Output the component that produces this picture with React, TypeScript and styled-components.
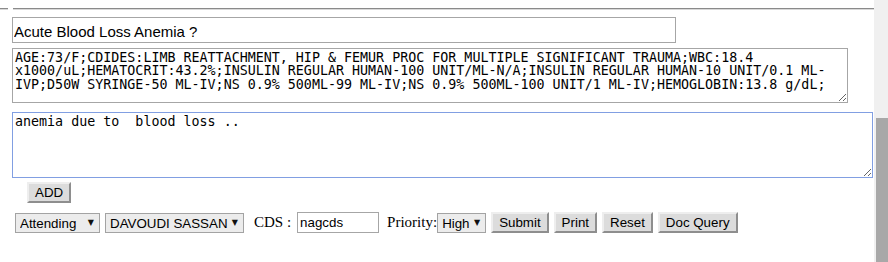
import React, { useState } from 'react';
import styled, { createGlobalStyle } from 'styled-components';

const GlobalStyle = createGlobalStyle`
  html, body {
    margin: 0;
    padding: 0;
    background: #fff;
    overflow: hidden;
  }
`;

const NOTE_TEXT =
  'AGE:73/F;CDIDES:LIMB REATTACHMENT, HIP & FEMUR PROC FOR MULTIPLE SIGNIFICANT TRAUMA;WBC:18.4 x1000/uL;HEMATOCRIT:43.2%;INSULIN REGULAR HUMAN-100 UNIT/ML-N/A;INSULIN REGULAR HUMAN-10 UNIT/0.1 ML-IVP;D50W SYRINGE-50 ML-IV;NS 0.9% 500ML-99 ML-IV;NS 0.9% 500ML-100 UNIT/1 ML-IV;HEMOGLOBIN:13.8 g/dL;';

const App = () => {
  const [title, setTitle] = useState('Acute Blood Loss Anemia ?');
  const [comment, setComment] = useState('anemia due to  blood loss ..');
  const [cds, setCds] = useState('nagcds');
  const [role, setRole] = useState('Attending');
  const [doctor, setDoctor] = useState('DAVOUDI SASSAN');
  const [priority, setPriority] = useState('High');

  return (
    <>
      <GlobalStyle />
      <Page>
        <Content>
          <RuleRow>
            <RuleStub />
            <Rule />
          </RuleRow>
          <Form>
            <TitleInput value={title} onChange={(e) => setTitle(e.target.value)} />
            <NoteArea readOnly value={NOTE_TEXT} />
            <CommentArea value={comment} onChange={(e) => setComment(e.target.value)} />
            <AddRow>
              <Button>ADD</Button>
            </AddRow>
            <ActionRow>
              <SelectBox width="85px">
                <Select value={role} onChange={(e) => setRole(e.target.value)}>
                  <option>Attending</option>
                  <option>Resident</option>
                </Select>
                <Arrow>▼</Arrow>
              </SelectBox>
              <SelectBox>
                <Select value={doctor} onChange={(e) => setDoctor(e.target.value)}>
                  <option>DAVOUDI SASSAN</option>
                </Select>
                <Arrow>▼</Arrow>
              </SelectBox>
              <Label>CDS :</Label>
              <CdsInput value={cds} onChange={(e) => setCds(e.target.value)} />
              <Label tight>Priority:</Label>
              <SelectBox>
                <Select value={priority} onChange={(e) => setPriority(e.target.value)}>
                  <option>High</option>
                  <option>Low</option>
                </Select>
                <Arrow>▼</Arrow>
              </SelectBox>
              <Buttons>
                <Button>Submit</Button>
                <Button>Print</Button>
                <Button>Reset</Button>
                <Button>Doc Query</Button>
              </Buttons>
            </ActionRow>
          </Form>
        </Content>
        <ScrollTrack>
          <ScrollThumb />
        </ScrollTrack>
      </Page>
    </>
  );
};

export default App;

const Page = styled.div`
  display: flex;
  width: 888px;
  height: 262px;
  overflow: hidden;
`;

const Content = styled.div`
  flex: 1;
  padding-top: 8px;
`;

const RuleRow = styled.div`
  display: flex;
  gap: 5px;
`;

const RuleStub = styled.div`
  width: 8px;
  border-top: 1px solid #8a8a8a;
  border-bottom: 1px solid #d8d8d8;
`;

const Rule = styled.div`
  flex: 1;
  border-top: 1px solid #8a8a8a;
  border-bottom: 1px solid #d8d8d8;
`;

const Form = styled.div`
  display: flex;
  flex-direction: column;
  align-items: flex-start;
  padding-left: 12px;
  padding-top: 7px;
`;

const TitleInput = styled.input`
  box-sizing: border-box;
  width: 664px;
  height: 26px;
  padding: 3px 2px 0 1px;
  border: 1px solid #a6a6a6;
  font-family: 'Liberation Sans', Arial, sans-serif;
  font-size: 15px;
  color: #000;
  outline: none;
`;

const Area = styled.textarea`
  box-sizing: border-box;
  padding: 2px;
  font-family: 'DejaVu Sans Mono', monospace;
  font-size: 13.333px;
  line-height: 13.4px;
  color: #000;
  outline: none;
  overflow: hidden;
`;

const NoteArea = styled(Area)`
  width: 836px;
  height: 55px;
  margin-top: 5px;
  border: 1px solid #a6a6a6;
`;

const CommentArea = styled(Area)`
  width: 861px;
  height: 66px;
  margin-top: 9px;
  border: 1px solid #819fe2;
`;

const AddRow = styled.div`
  margin-top: 4px;
  padding-left: 15px;
`;

const Button = styled.button`
  box-sizing: border-box;
  height: 21px;
  padding: 0 6px;
  background: #dcdcdc;
  border: 2px solid;
  border-color: #eeeeee #8e8e8e #8e8e8e #eeeeee;
  font-family: 'Liberation Sans', Arial, sans-serif;
  font-size: 13.333px;
  color: #000;
`;

const ActionRow = styled.div`
  display: flex;
  align-items: center;
  margin-top: 9px;
  padding-left: 3px;
  height: 21px;
`;

const SelectBox = styled.div<{ width?: string }>`
  position: relative;
  box-sizing: border-box;
  width: ${({ width }) => width || 'auto'};
  height: 20px;
  margin-right: 5px;
  background: #ececec;
  border: 1px solid #a3a3a3;
`;

const Select = styled.select`
  appearance: none;
  box-sizing: border-box;
  width: 100%;
  height: 18px;
  padding: 0 15px 0 4px;
  margin: 0;
  border: none;
  background: transparent;
  font-family: 'Liberation Sans', Arial, sans-serif;
  font-size: 13.333px;
  color: #000;
  outline: none;
`;

const Arrow = styled.span`
  position: absolute;
  right: 5px;
  top: 4px;
  font-family: 'DejaVu Sans', sans-serif;
  font-size: 8px;
  line-height: 10px;
  color: #111;
  pointer-events: none;
`;

const Label = styled.span<{ tight?: boolean }>`
  margin: ${({ tight }) => (tight ? '0 0 0 8px' : '0 6px 0 5px')};
  font-family: 'Liberation Serif', 'Times New Roman', serif;
  font-size: 15px;
  color: #000;
`;

const CdsInput = styled.input`
  box-sizing: border-box;
  width: 82px;
  height: 21px;
  padding: 1px 2px;
  border: 1px solid #a6a6a6;
  font-family: 'Liberation Sans', Arial, sans-serif;
  font-size: 13.333px;
  color: #000;
  outline: none;
`;

const Buttons = styled.div`
  display: flex;
  gap: 5px;
`;

const ScrollTrack = styled.div`
  display: flex;
  width: 14px;
  box-sizing: border-box;
  padding: 118px 0 0 2px;
  background: #f0f0f0;
`;

const ScrollThumb = styled.div`
  flex: 1;
  background: #a8a8a8;
`;
